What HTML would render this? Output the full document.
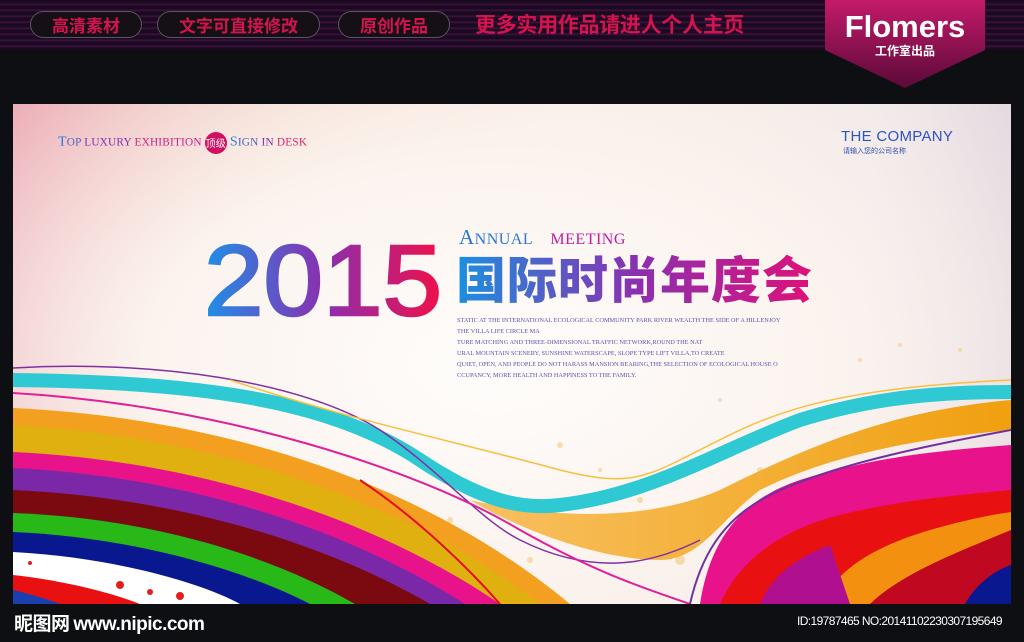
<!DOCTYPE html>
<html><head><meta charset="utf-8"><style>
*{margin:0;padding:0;box-sizing:border-box}
body{width:1024px;height:642px;background:#0e0f13;position:relative;overflow:hidden;font-family:"Liberation Sans","Noto Sans CJK SC",sans-serif}
.top{position:absolute;left:0;top:0;width:1024px;height:50px;background:repeating-linear-gradient(180deg,#1a0a1e 0,#1a0a1e 3px,#45104a 4px,#1a0a1e 6px);}
.pill{position:absolute;top:11px;height:27px;border:1px solid #5a5560;border-radius:14px;background:#141016;color:#d4134f;font-size:17px;font-weight:bold;line-height:25px;text-align:center;font-family:"Noto Sans CJK SC",sans-serif}
.slogan{position:absolute;left:475px;top:11px;color:#d4134f;font-size:21px;font-weight:bold;line-height:27px;font-family:"Noto Sans CJK SC",sans-serif;letter-spacing:-.3px}
.badge{position:absolute;left:825px;top:0;width:160px;height:90px}
.poster{position:absolute;left:13px;top:104px;width:998px;height:500px;overflow:hidden;background:radial-gradient(ellipse 700px 420px at 480px 260px,#fffdfb 0%,#fbf3ee 50%,rgba(250,240,235,0) 100%),linear-gradient(100deg,#e9a0ae 0%,#f2cfc0 25%,#f8eadc 50%,#eee6e8 80%,#d9ccd8 100%)}
.foot{position:absolute;top:610px;color:#fff}
</style></head><body>
<div class="top"></div>
<div class="pill" style="left:30px;width:112px">高清素材</div>
<div class="pill" style="left:157px;width:163px">文字可直接修改</div>
<div class="pill" style="left:338px;width:112px">原创作品</div>
<div class="slogan">更多实用作品请进人个人主页</div>
<svg class="badge" viewBox="0 0 160 90"><defs><linearGradient id="bg" x1="0" y1="0" x2="0" y2="1"><stop offset="0" stop-color="#c41a6a"/><stop offset="1" stop-color="#5a0a38"/></linearGradient></defs>
<path d="M0 0H160V50L80 88L0 50Z" fill="url(#bg)"/>
<text x="80" y="37" text-anchor="middle" fill="#fff" font-family="Liberation Sans" font-weight="bold" font-size="31">Flomers</text>
<text x="80" y="55" text-anchor="middle" fill="#fff" font-family="Noto Sans CJK SC" font-weight="bold" font-size="12">工作室出品</text></svg>

<div class="poster">
<svg width="998" height="500" viewBox="13 104 998 500" style="position:absolute;left:0;top:0">
<defs><linearGradient id="ny" x1="0" x2="1"><stop offset="0" stop-color="#1e90e8"/><stop offset=".5" stop-color="#8a2fb0"/><stop offset="1" stop-color="#f0104a"/></linearGradient>
<linearGradient id="og" x1="0" x2="1"><stop offset="0" stop-color="#f8c060"/><stop offset="1" stop-color="#f0a010"/></linearGradient></defs>
<g fill="#f5d090" opacity=".7"><circle cx="560" cy="445" r="3"/><circle cx="600" cy="470" r="2"/><circle cx="720" cy="400" r="2"/><circle cx="760" cy="470" r="3"/><circle cx="860" cy="360" r="2"/><circle cx="900" cy="345" r="2"/><circle cx="960" cy="350" r="2"/><circle cx="640" cy="500" r="3"/><circle cx="370" cy="490" r="5"/><circle cx="450" cy="520" r="3"/><circle cx="680" cy="560" r="5"/><circle cx="530" cy="560" r="3"/></g>
<path d="M470 500 C560 520 650 520 720 490 C820 440 900 410 1011 400 L1011 430 C900 440 820 460 760 490 C720 520 700 560 660 560 C600 560 520 530 470 500Z" fill="url(#og)"/>
<path d="M13 380 C200 382 330 400 420 460 C480 500 520 510 560 505 C650 495 720 450 800 420 C880 395 950 392 1011 392" stroke="#2ec9d2" stroke-width="14" fill="none"/>
<path d="M13 368 C150 360 300 380 380 430 C440 470 480 520 520 540 C600 580 660 560 700 540" stroke="#8030a0" stroke-width="1.5" fill="none"/>
<path d="M230 380 C350 420 450 440 560 470 C620 485 640 480 680 460 C760 420 800 390 1011 380" stroke="#f8c040" stroke-width="1.5" fill="none"/>
<path d="M13 408 C220 418 420 480 570 604 L13 604Z" fill="#f3a020"/>
<path d="M13 425 C200 435 400 495 540 604 L13 604Z" fill="#e0b010"/>
<path d="M13 452 C190 460 370 515 500 604 L13 604Z" fill="#e8128a"/>
<path d="M13 468 C180 476 340 525 465 604 L13 604Z" fill="#7a28a8"/>
<path d="M13 490 C170 497 320 540 430 604 L13 604Z" fill="#7a0a10"/>
<path d="M13 513 C150 518 270 555 355 604 L13 604Z" fill="#28b818"/>
<path d="M13 532 C130 537 240 568 310 604 L13 604Z" fill="#0a1890"/>
<path d="M13 552 C110 557 200 582 240 604 L13 604Z" fill="#ffffff"/>
<g fill="#e02020"><circle cx="120" cy="585" r="4"/><circle cx="150" cy="592" r="3"/><circle cx="180" cy="596" r="4"/><circle cx="30" cy="563" r="2"/></g>
<path d="M13 575 C60 580 110 592 140 604 L13 604Z" fill="#e81010"/>
<path d="M13 590 C30 594 50 600 60 604 L13 604Z" fill="#1a40b0"/>
<path d="M13 393 C220 405 420 470 520 530 C600 575 650 590 690 604" stroke="#e0209a" stroke-width="2" fill="none"/>
<path d="M360 480 C420 520 470 570 500 604" stroke="#e01010" stroke-width="2" fill="none"/>
<path d="M700 604 C710 540 740 500 800 480 C880 455 950 450 1011 445 L1011 604Z" fill="#e8128a"/>
<path d="M720 604 C740 560 780 530 840 515 C900 500 960 495 1011 490 L1011 604Z" fill="#e81010"/>
<path d="M820 604 C840 565 880 545 930 530 C965 520 990 515 1011 512 L1011 604Z" fill="#f39010"/>
<path d="M870 604 C900 575 950 555 1011 530 L1011 604Z" fill="#c00820"/>
<path d="M965 604 C975 585 995 570 1011 565 L1011 604Z" fill="#0a1890"/>
<path d="M760 604 C770 580 790 560 830 545 L850 604Z" fill="#b01090"/>
<path d="M690 604 C700 560 720 520 770 495 C830 465 930 445 1011 430" stroke="#7030a0" stroke-width="2" fill="none"/>
<text x="204" y="315" font-family="Liberation Sans" font-size="100" fill="url(#ny)" stroke="url(#ny)" stroke-width="2.5" textLength="238" lengthAdjust="spacingAndGlyphs">2015</text>
</svg>
<div style="position:absolute;left:45px;top:28px;font-family:'Liberation Serif',serif;font-size:11.3px;color:#5060c0;letter-spacing:.2px;white-space:nowrap">
<span style="font-size:14px;color:#2a78d8">T</span>OP <span style="color:#8030b0">LUXURY</span> <span style="color:#d0208a">EXHIBITION</span>
<span style="display:inline-block;width:22px;height:22px;border-radius:11px;background:#d01060;color:#fff;font-size:10px;line-height:22px;text-align:center;font-family:'Noto Sans CJK SC';vertical-align:middle">顶级</span>
<span style="font-size:14px;color:#2a88d8">S</span>IGN <span style="color:#8030b0">IN</span> <span style="color:#e0206a">DESK</span></div>
<div style="position:absolute;left:828px;top:24px;font-size:15px;color:#2a58c0;letter-spacing:.3px">THE <span style="color:#3050c8">COMPANY</span></div>
<div style="position:absolute;left:830px;top:42px;font-size:7px;color:#3050b0;font-family:'Noto Sans CJK SC'">请输入您的公司名称</div>
<div style="position:absolute;left:446px;top:121px;font-family:'Liberation Serif',serif;font-size:21px;color:#2a78d0;letter-spacing:.5px;white-space:nowrap">A<span style="font-size:16px">NNUAL</span>&nbsp;&nbsp;&nbsp;<span style="font-size:16px;color:#c020a0">MEETING</span></div>
<div style="position:absolute;left:443px;top:145px;font-family:'Noto Sans CJK SC',sans-serif;font-weight:900;font-size:50px;line-height:56px;letter-spacing:1px;background:linear-gradient(90deg,#1a90e0,#8a30b0 50%,#e0107a);-webkit-background-clip:text;color:transparent">国际时尚年度会</div>
<div style="position:absolute;left:444px;top:212px;font-family:'Liberation Serif',serif;font-size:6.3px;line-height:10.9px;color:#6050b0;white-space:nowrap">STATIC AT THE INTERNATIONAL ECOLOGICAL COMMUNITY PARK RIVER WEALTH THE SIDE OF A HILLENJOY<br>THE VILLA LIFE CIRCLE MA<br>TURE MATCHING AND THREE-DIMENSIONAL TRAFFIC NETWORK,ROUND THE NAT<br>URAL MOUNTAIN SCENERY, SUNSHINE WATERSCAPE, SLOPE TYPE LIFT VILLA,TO CREATE<br>QUIET, OPEN, AND PEOPLE DO NOT HARASS MANSION BEARING,THE SELECTION OF ECOLOGICAL HOUSE O<br>CCUPANCY, MORE HEALTH AND HAPPINESS TO THE FAMILY.</div>
</div>
<div class="foot" style="left:14px;top:609px;font-size:19px;font-weight:bold;font-family:'Noto Sans CJK SC',sans-serif;letter-spacing:-.5px">昵图网 <span style="font-family:'Liberation Sans'">www.nipic.com</span></div>
<div class="foot" style="left:797px;top:614px;font-size:12px;letter-spacing:-.6px">ID:19787465 NO:20141102230307195649</div>
</body></html>
